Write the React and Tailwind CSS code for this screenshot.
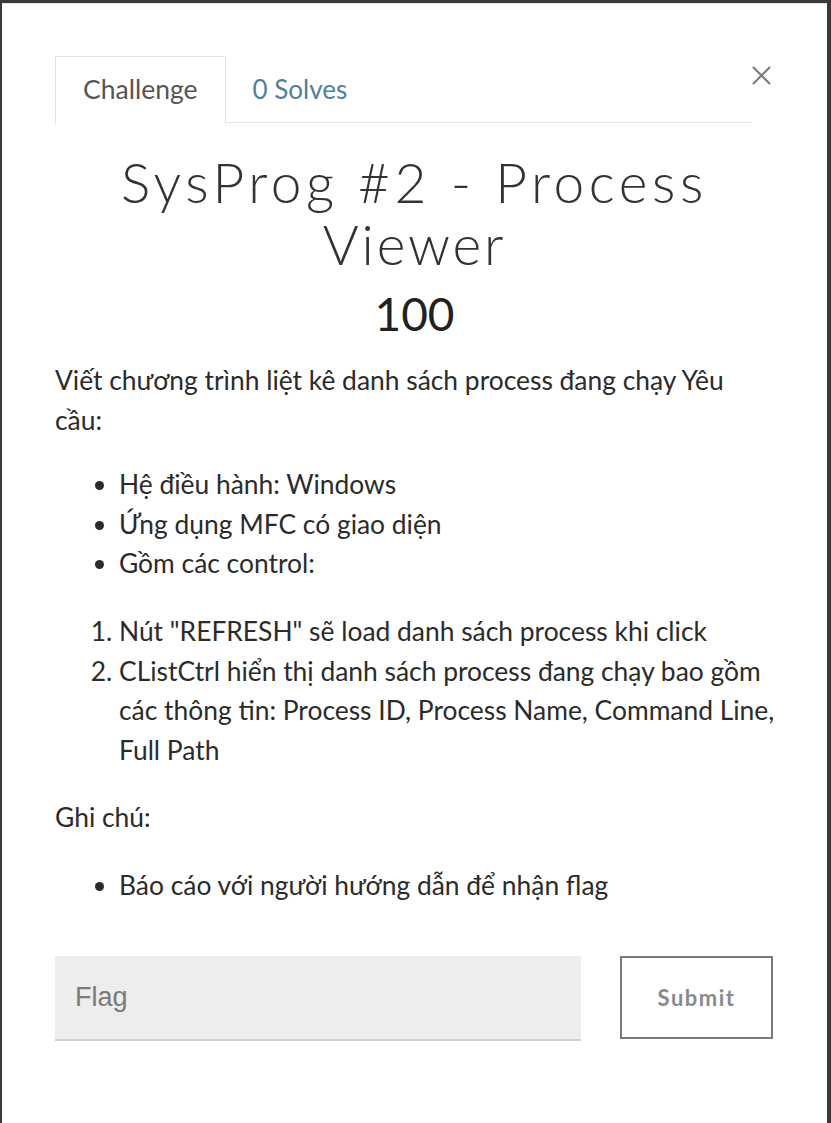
import React from "react";

export default function App() {
  const body = { fontFamily: "Lato, 'Noto Sans', sans-serif" };
  return (
    <div className="w-[831px] h-[1123px] bg-[#3a3a3a] pt-[3px] pl-[2px] pr-[4px] overflow-hidden">
      <div className="h-full bg-white border-t border-[#e6e6e6] pt-[52px] px-[53px] text-[#2b2b2b]" style={body}>
        {/* Tabs */}
        <div className="flex items-start">
          <div className="flex-1 flex border-b border-[#e3e3e3] h-[67px]">
            <div className="h-[68px] px-[27px] border border-[#e3e3e3] border-b-white bg-white flex items-center text-[26.5px] text-[#555]">
              Challenge
            </div>
            <div className="h-[67px] px-[27px] flex items-center text-[26px] text-[#4f7fa3]">
              0 Solves
            </div>
          </div>
          <div className="w-[22px] pt-[10px]">
            <svg width="19" height="19" viewBox="0 0 19 19" className="block">
              <path d="M1.5 1.5 L17.5 17.5 M17.5 1.5 L1.5 17.5" stroke="#7a7a7a" strokeWidth="2" strokeLinecap="round" fill="none" />
            </svg>
          </div>
        </div>

        {/* Title */}
        <div className="mt-[28px] text-center text-[55px] leading-[62px] font-light text-[#333]">
          <div className="tracking-[4.6px]">SysProg #2 - Process</div>
          <div className="tracking-[2.8px]">Viewer</div>
        </div>
        <div className="mt-[11px] text-center text-[46px] leading-[56px] text-[#222]">100</div>

        {/* Description */}
        <div className="mt-[19px] -mr-[8px] text-[26.4px] leading-[39.6px] text-[#2b2b2b]">
          <p className="pr-[8px]">Viết chương trình liệt kê danh sách process đang chạy Yêu cầu:</p>
          <ul className="mt-[25px] list-disc pl-[64px]">
            <li>Hệ điều hành: Windows</li>
            <li>Ứng dụng MFC có giao diện</li>
            <li>Gồm các control:</li>
          </ul>
          <ol className="mt-[28px] list-decimal pl-[64px]">
            <li>Nút "REFRESH" sẽ load danh sách process khi click</li>
            <li>CListCtrl hiển thị danh sách process đang chạy bao gồm các thông tin: Process ID, Process Name, Command Line, Full Path</li>
          </ol>
          <p className="mt-[28px]">Ghi chú:</p>
          <ul className="mt-[28px] list-disc pl-[64px]">
            <li>Báo cáo với người hướng dẫn để nhận flag</li>
          </ul>
        </div>

        {/* Flag form */}
        <div className="mt-[50px] flex items-start gap-[39px] pr-[1px]">
          <div className="w-[526px] h-[85px] bg-[#ededed] border-b-2 border-[#d0d0d0] flex items-center pl-[20px] text-[27px] text-[#7a7a7a]" style={{ fontFamily: "'Liberation Sans', Arial, sans-serif" }}>
            Flag
          </div>
          <div className="flex-1 h-[83px] border-2 border-[#7a7a7a] flex items-center justify-center text-[22px] font-bold text-[#8a8a8a] tracking-[1.5px]">
            Submit
          </div>
        </div>
      </div>
    </div>
  );
}
